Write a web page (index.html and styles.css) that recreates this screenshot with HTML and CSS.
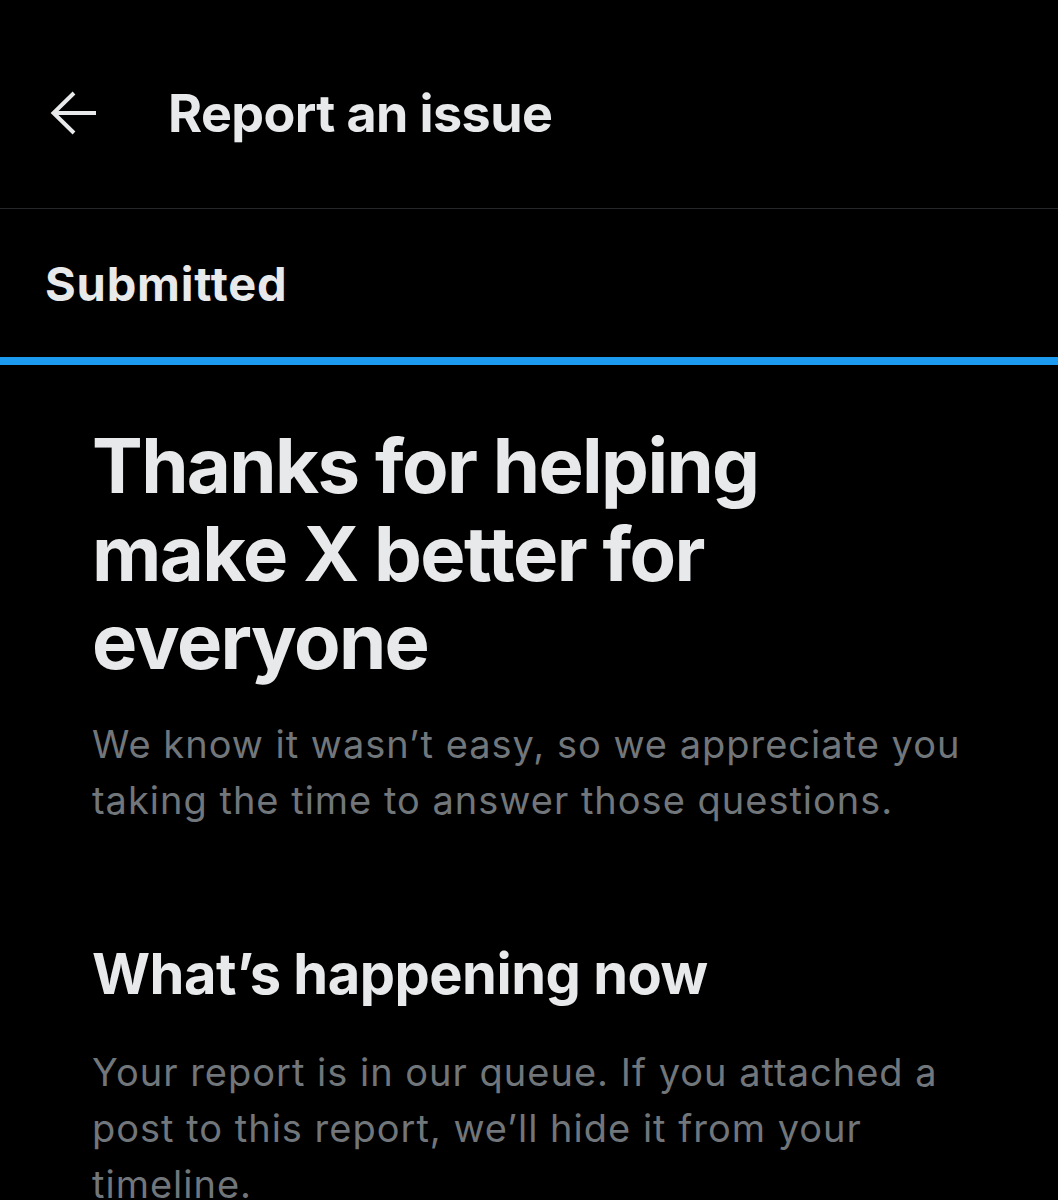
FILE: index.html
```html
<!DOCTYPE html>
<html lang="en">
<head>
<meta charset="utf-8">
<title>Report an issue</title>
<link rel="stylesheet" href="styles.css">
</head>
<body>
<div class="app">
  <header class="topbar">
    <span class="back" aria-label="Back">
      <svg width="48" height="46" viewBox="0 0 48 46" fill="none" stroke="#e7e9ea" stroke-width="4" stroke-linecap="butt" stroke-linejoin="miter">
        <path d="M46 23 H4"/>
        <path d="M24 3 L3.5 23 L24 43"/>
      </svg>
    </span>
    <h1 class="title">Report an issue</h1>
  </header>
  <div class="status">
    <span class="status-label">Submitted</span>
  </div>
  <div class="progress"></div>
  <main class="content">
    <h2 class="headline">Thanks for helping make X better for everyone</h2>
    <p class="body">We know it wasn’t easy, so we appreciate you taking the time to answer those questions.</p>
    <h3 class="subhead">What’s happening now</h3>
    <p class="body">Your report is in our queue. If you attached a post to this report, we’ll hide it from your timeline.</p>
  </main>
</div>
</body>
</html>
```
FILE: styles.css
```css
html, body {
  margin: 0;
  padding: 0;
  background: #000;
}
body {
  font-family: Inter, "Noto Sans", sans-serif;
  color: #e7e9ea;
}
.app {
  width: 1058px;
  height: 1200px;
  overflow: hidden;
  background: #000;
}
.topbar {
  height: 190px;
  padding-top: 18px;
  display: flex;
  align-items: center;
  border-bottom: 1px solid #25282b;
}
.back {
  display: flex;
  margin-left: 50px;
  width: 48px;
  height: 46px;
}
.title {
  margin: 0 0 0 70px;
  font-size: 52px;
  font-weight: 700;
  letter-spacing: -0.6px;
}
.status {
  height: 148px;
  display: flex;
  align-items: center;
  padding-left: 45px;
}
.status-label {
  font-size: 47px;
  font-weight: 700;
  letter-spacing: 0.8px;
}
.progress {
  height: 8px;
  background: #1d9bf0;
}
.content {
  padding: 56px 92px 0 92px;
}
.headline {
  margin: 0;
  max-width: 780px;
  font-size: 76px;
  line-height: 88px;
  font-weight: 700;
  letter-spacing: -1.6px;
}
.body {
  margin: 31px 0 0 0;
  font-size: 38px;
  line-height: 56px;
  font-weight: 400;
  letter-spacing: 1px;
  color: #71767b;
}
.subhead {
  margin: 112px 0 0 0;
  font-size: 56px;
  line-height: 68px;
  font-weight: 700;
  letter-spacing: -0.5px;
}
.subhead + .body {
  margin-top: 36px;
}
```
